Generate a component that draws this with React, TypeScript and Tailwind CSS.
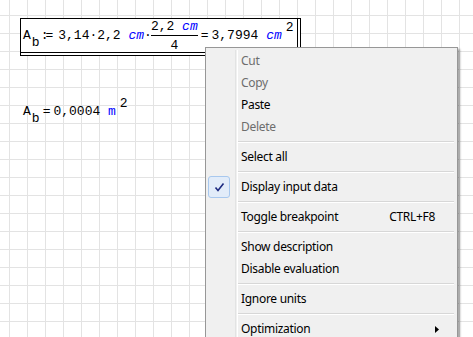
import React from "react";

type Item =
  | { kind: "sep" }
  | {
      kind: "item";
      label: string;
      disabled?: boolean;
      checked?: boolean;
      shortcut?: string;
      submenu?: boolean;
    };

const menuItems: Item[] = [
  { kind: "item", label: "Cut", disabled: true },
  { kind: "item", label: "Copy", disabled: true },
  { kind: "item", label: "Paste" },
  { kind: "item", label: "Delete", disabled: true },
  { kind: "sep" },
  { kind: "item", label: "Select all" },
  { kind: "sep" },
  { kind: "item", label: "Display input data", checked: true },
  { kind: "sep" },
  { kind: "item", label: "Toggle breakpoint", shortcut: "CTRL+F8" },
  { kind: "sep" },
  { kind: "item", label: "Show description" },
  { kind: "item", label: "Disable evaluation" },
  { kind: "sep" },
  { kind: "item", label: "Ignore units" },
  { kind: "sep" },
  { kind: "item", label: "Optimization", submenu: true },
];

const Unit = ({ children }: { children: React.ReactNode }) => (
  <span className="text-[#0000ff] italic">{children}</span>
);

const Sub = ({ children }: { children: React.ReactNode }) => (
  <span className="relative top-[7px] ml-[1px]">{children}</span>
);

const Sup = ({ children }: { children: React.ReactNode }) => (
  <span className="relative -top-[8px] ml-[4px]">{children}</span>
);

const ContextMenu = () => (
  <div className="absolute left-[205px] top-[47px] w-[253px] border border-[#979797] bg-[#f0f0f0] p-[2px] shadow-[2px_2px_2px_rgba(0,0,0,0.35)] font-['Noto_Sans',sans-serif] text-[12px] tracking-[-0.3px]">
    {/* icon gutter line */}
    <div className="absolute left-[29px] top-[2px] bottom-0 w-[2px] border-l border-[#e2e3e3] shadow-[1px_0_0_#ffffff]" />
    {menuItems.map((it, i) =>
      it.kind === "sep" ? (
        <div key={i} className="h-[8px] flex items-center pl-[30px] pr-[1px]">
          <div className="w-full h-[2px] border-t border-[#d7d7d7] bg-white" />
        </div>
      ) : (
        <div key={i} className="relative h-[22px] flex items-center pl-[33px] pr-[16px]">
          {it.checked && (
            <div className="absolute left-0 top-0 w-[22px] h-[22px] rounded-[3px] border border-[#a8c8ee] bg-[#e2ecf9] flex items-center justify-center">
              <svg width="11" height="11" viewBox="0 0 11 11">
                <path d="M1.5 5.5 L4 8.5 L9.5 1.5" fill="none" stroke="#1d2a80" strokeWidth="1.6" />
              </svg>
            </div>
          )}
          <span className={it.disabled ? "text-[#6d6d6d]" : "text-black"}>{it.label}</span>
          {it.shortcut && <span className="ml-auto mr-[4px] text-black">{it.shortcut}</span>}
          {it.submenu && (
            <svg className="ml-auto" width="4" height="7" viewBox="0 0 4 7">
              <path d="M0 0 L4 3.5 L0 7 Z" fill="#000" />
            </svg>
          )}
        </div>
      )
    )}
  </div>
);

export default function App() {
  return (
    <div className="relative w-[473px] h-[337px] overflow-hidden bg-white bg-[linear-gradient(to_right,#e3e3e3_1px,transparent_1px),linear-gradient(to_bottom,#e3e3e3_1px,transparent_1px)] bg-[size:18px_18px] bg-[position:9px_15px]">
      <div className="pt-[18px] pl-[20px] font-['Liberation_Mono',monospace] text-[13px] leading-none text-black">
        {/* formula being edited */}
        <div className="inline-block bg-white border border-black pr-[2px] pb-[2px]">
          <div className="w-[277px] h-[34px] border-r border-b border-black flex items-center pl-[2px] whitespace-pre">
            <span>A</span>
            <Sub>b</Sub>
            <span className="ml-[1px] tracking-[-3px]">:=</span>
            <span className="ml-[8px]">3,14·2,2 </span>
            <Unit>cm</Unit>
            <span>·</span>
            <span className="flex flex-col items-center mx-[-1px]">
              <span className="pb-[2px]">
                2,2 <Unit>cm</Unit>
              </span>
              <span className="w-full h-px bg-black" />
              <span className="pt-[3px]">4</span>
            </span>
            <span className="ml-[4px]">=</span>
            <span className="ml-[3px]">3,7994 </span>
            <Unit>cm</Unit>
            <Sup>2</Sup>
          </div>
        </div>

        {/* result */}
        <div className="flex items-center mt-[49px] pl-[3px] whitespace-pre">
          <span>A</span>
          <Sub>b</Sub>
          <span className="ml-[3px]">=</span>
          <span className="ml-[3px]">0,0004 </span>
          <span className="text-[#0000ff]">m</span>
          <Sup>2</Sup>
        </div>
      </div>

      <ContextMenu />
    </div>
  );
}
